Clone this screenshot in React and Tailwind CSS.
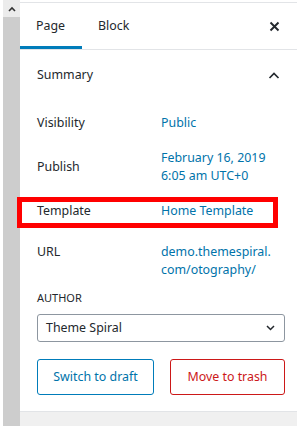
import React from 'react';

const Row = ({ label, children, className = '' }) => (
  <div className={`flex items-center ${className}`}>
    <div className="w-[124px] shrink-0 text-[#23282d]">{label}</div>
    <div className="text-[#0073aa] leading-[18px]">{children}</div>
  </div>
);

const App = () => {
  return (
    <div className="flex w-[297px] h-[426px] bg-white overflow-hidden text-[12.4px]" style={{ fontFamily: '"Noto Sans", "Open Sans", sans-serif' }}>
      {/* scrollbar strip */}
      <div className="w-[20px] shrink-0 flex flex-col pl-[3px]">
        <div className="h-[17px] bg-[#ececec] flex items-center justify-center">
          <svg width="8" height="6" viewBox="0 0 8 6"><path d="M1 5 L4 2 L7 5" fill="none" stroke="#333" strokeWidth="1.6" /></svg>
        </div>
        <div className="flex-1 bg-[#cdcdcd]" />
      </div>

      <div className="flex-1 flex flex-col mt-[2px] border-t border-[#e2e4e7]">
        {/* tabs */}
        <div className="h-[47px] flex items-stretch border-b border-[#e2e4e7]">
          <div className="w-[62px] pl-[16px] flex items-center border-b-[3px] border-[#007cba] pt-[3px] text-[#23282d]">Page</div>
          <div className="pl-[16px] flex items-center pt-[3px] pb-[3px] text-[#23282d]">Block</div>
          <div className="ml-auto w-[48px] flex items-center justify-center pt-[1px]">
            <svg width="11" height="11" viewBox="0 0 11 11"><path d="M1.5 1.5 L9.5 9.5 M9.5 1.5 L1.5 9.5" stroke="#23282d" strokeWidth="1.9" /></svg>
          </div>
        </div>

        {/* summary header */}
        <div className="h-[50px] flex items-center pl-[17px] text-[#23282d]">
          <span>Summary</span>
          <div className="ml-auto w-[48px] flex items-center justify-center">
            <svg width="12" height="7" viewBox="0 0 12 7"><path d="M1.5 6 L6 1.5 L10.5 6" fill="none" stroke="#23282d" strokeWidth="1.7" /></svg>
          </div>
        </div>

        <div className="flex flex-col pl-[17px] pr-[13px] pt-[10px]">
          <Row label="Visibility" className="h-[26px]">Public</Row>
          <Row label="Publish" className="h-[36px] mt-[13px]">
            <div>February 16, 2019</div>
            <div>6:05 am UTC+0</div>
          </Row>
          <div className="relative mt-[13px]">
            <Row label="Template" className="h-[26px]">Home Template</Row>
            <div className="absolute top-[-1px] left-[-20px] w-[261px] h-[31px] border-[5px] border-[#ff0000] pointer-events-none" />
          </div>
          <div className="flex items-start mt-[19px]">
            <div className="w-[124px] shrink-0 leading-[18px] text-[#23282d]">URL</div>
            <div className="text-[#0073aa] leading-[18px]">
              <div>demo.themespiral.</div>
              <div>com/otography/</div>
            </div>
          </div>
          <div className="mt-[11px] h-[16px] leading-[16px] text-[11px] uppercase text-[#23282d]">Author</div>
          <div className="mt-[8px] h-[28px] border border-[#8d96a0] rounded-[3px] flex items-center pl-[8px] pr-[9px] text-[#23282d]">
            <span>Theme Spiral</span>
            <svg className="ml-auto" width="9" height="6" viewBox="0 0 9 6"><path d="M1 1 L4.5 4.5 L8 1" fill="none" stroke="#23282d" strokeWidth="1.5" /></svg>
          </div>
          <div className="mt-[17px] flex gap-[16px]">
            <button className="w-[117px] h-[36px] border border-[#007cba] rounded-[3px] text-[#0073aa]">Switch to draft</button>
            <button className="w-[115px] h-[36px] border border-[#cc1818] rounded-[3px] text-[#cc1818]">Move to trash</button>
          </div>
        </div>

        <div className="mt-[16px] flex-1 border-t border-[#e2e4e7] bg-[#f0f0f0]" />
      </div>
    </div>
  );
};

export default App;
